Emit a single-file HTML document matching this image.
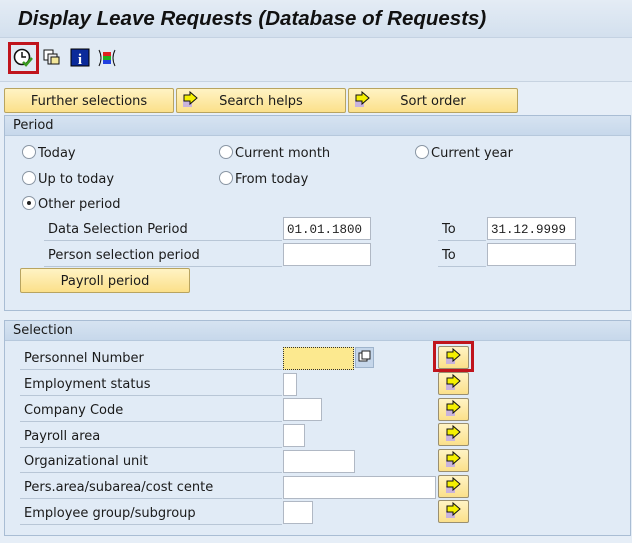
<!DOCTYPE html>
<html><head><meta charset="utf-8"><style>
*{box-sizing:border-box;margin:0;padding:0}
body{width:632px;height:543px;background:#e6eef7;font-family:"DejaVu Sans","Liberation Sans",sans-serif;font-size:13px;color:#1a1a1a;position:relative;overflow:hidden}
.a{position:absolute}
.title{left:0;top:0;width:632px;height:38px;background:linear-gradient(#e4ecf5,#d3e0ee);border-bottom:1px solid #c4d2e2}
.title span{position:absolute;left:18px;top:7px;font:italic bold 20.5px "Liberation Sans",sans-serif;color:#111}
.tb{left:0;top:38px;width:632px;height:44px;background:#e1eaf4;border-bottom:1px solid #c7d3e1}
.btn{background:linear-gradient(#fff3c4,#fbe08a);border:1px solid #b8a460;border-radius:2px;text-align:center;line-height:26px;height:25px}
.grp{border:1px solid #a9bdd4;background:#e1ebf6}
.gh{background:linear-gradient(#d6e3f1,#c7d8eb);height:20px;line-height:20px;padding-left:8px;border-bottom:1px solid #b6c8dc}
.inp{background:#fff;border:1px solid #b0b8c4;height:23px;font:12.5px "Liberation Mono",monospace;padding:5px 3px 0;color:#222}
.lbl{border-bottom:1px solid #b8c6d6;height:25px;line-height:28px}
.rad{width:14px;height:14px;border:1px solid #8a96a4;border-radius:50%;background:#fff;display:inline-block;vertical-align:-2px;margin-right:2px;position:relative}
.ab{width:31px;height:23px;background:linear-gradient(#fff3c4,#fbe08a);border:1px solid #9a8f70;border-radius:2px}
</style></head><body>
<div class="a title"><span>Display Leave Requests (Database of Requests)</span></div>
<div class="a tb"></div>
<div class="a" style="left:8px;top:42px;width:31px;height:32px;border:3px solid #c0141c"></div>
<svg class="a" style="left:12px;top:47px" width="22" height="22"><circle cx="10" cy="10" r="7.5" fill="#fff" stroke="#111" stroke-width="1.6"/><path d="M10 5v5h4" stroke="#111" stroke-width="1.5" fill="none"/><path d="M11 15l3 3 6-7" stroke="#3a9a20" stroke-width="2.5" fill="none"/></svg>
<svg class="a" style="left:42px;top:48px" width="20" height="20"><rect x="2" y="2" width="9" height="10" fill="#fff" stroke="#111"/><rect x="6" y="6" width="9" height="10" fill="#eee" stroke="#111"/><rect x="9" y="9" width="8" height="7" fill="#f3e79a" stroke="#111"/></svg>
<svg class="a" style="left:70px;top:48px" width="20" height="20"><rect x="1" y="1" width="18" height="17" fill="#0b2a9a" stroke="#000"/><text x="10" y="16" fill="#fff" font-family="Liberation Serif" font-weight="bold" font-size="15" text-anchor="middle">i</text></svg>
<svg class="a" style="left:97px;top:48px" width="20" height="20"><path d="M2 2q4 8 0 16M18 2q-4 8 0 16" stroke="#111" fill="none"/><rect x="6" y="4" width="8" height="4" fill="#e02020"/><rect x="6" y="8" width="8" height="4" fill="#20b020"/><rect x="6" y="12" width="8" height="4" fill="#2040e0"/></svg>
<div class="a btn" style="left:4px;top:88px;width:170px">Further selections</div>
<div class="a btn" style="left:176px;top:88px;width:170px">Search helps</div>
<div class="a btn" style="left:348px;top:88px;width:170px">Sort order</div>
<svg class="a" style="left:181px;top:91px" width="20" height="18"><rect x="2" y="9" width="9" height="7" fill="#c9b3dc"/><path d="M3 4h6v-3l7 6-7 6v-3h-6z" fill="#f5f000" stroke="#111"/></svg>
<svg class="a" style="left:353px;top:91px" width="20" height="18"><rect x="2" y="9" width="9" height="7" fill="#c9b3dc"/><path d="M3 4h6v-3l7 6-7 6v-3h-6z" fill="#f5f000" stroke="#111"/></svg>
<div class="a grp" style="left:4px;top:115px;width:627px;height:196px"><div class="gh">Period</div></div>
<div class="a" style="left:22px;top:145px"><span class="rad"></span>Today</div>
<div class="a" style="left:219px;top:145px"><span class="rad"></span>Current month</div>
<div class="a" style="left:415px;top:145px"><span class="rad"></span>Current year</div>
<div class="a" style="left:22px;top:171px"><span class="rad"></span>Up to today</div>
<div class="a" style="left:219px;top:171px"><span class="rad"></span>From today</div>
<div class="a" style="left:22px;top:196px"><span class="rad"><span style="position:absolute;left:4px;top:4px;width:4px;height:4px;background:#222;border-radius:50%"></span></span>Other period</div>
<div class="a lbl" style="left:44px;top:216px;width:238px;padding-left:4px">Data Selection Period</div>
<div class="a lbl" style="left:44px;top:242px;width:238px;padding-left:4px">Person selection period</div>
<div class="a inp" style="left:283px;top:217px;width:88px">01.01.1800</div>
<div class="a inp" style="left:283px;top:243px;width:88px"></div>
<div class="a lbl" style="left:438px;top:216px;width:48px;padding-left:4px">To</div>
<div class="a lbl" style="left:438px;top:242px;width:48px;padding-left:4px">To</div>
<div class="a inp" style="left:487px;top:217px;width:89px">31.12.9999</div>
<div class="a inp" style="left:487px;top:243px;width:89px"></div>
<div class="a btn" style="left:20px;top:268px;width:170px">Payroll period</div>
<div class="a grp" style="left:4px;top:320px;width:627px;height:216px"><div class="gh">Selection</div></div>
<div class="a lbl" style="left:20px;top:345px;width:262px;padding-left:4px">Personnel Number</div>
<div class="a lbl" style="left:20px;top:371px;width:262px;padding-left:4px">Employment status</div>
<div class="a lbl" style="left:20px;top:397px;width:262px;padding-left:4px">Company Code</div>
<div class="a lbl" style="left:20px;top:423px;width:262px;padding-left:4px">Payroll area</div>
<div class="a lbl" style="left:20px;top:448px;width:262px;padding-left:4px">Organizational unit</div>
<div class="a lbl" style="left:20px;top:474px;width:262px;padding-left:4px">Pers.area/subarea/cost cente</div>
<div class="a lbl" style="left:20px;top:500px;width:262px;padding-left:4px">Employee group/subgroup</div>
<div class="a inp" style="left:283px;top:347px;width:71px;background:#fce98f;border:1px dotted #333"></div>
<div class="a" style="left:355px;top:347px;width:19px;height:21px;background:#c5d6ea;border:1px solid #9fb4cc"><svg width="17" height="19"><rect x="3" y="5" width="8" height="8" fill="#fff" stroke="#222"/><rect x="6" y="3" width="8" height="8" fill="#fff" stroke="#222"/></svg></div>
<div class="a inp" style="left:283px;top:373px;width:14px"></div>
<div class="a inp" style="left:283px;top:398px;width:39px"></div>
<div class="a inp" style="left:283px;top:424px;width:22px"></div>
<div class="a inp" style="left:283px;top:450px;width:72px"></div>
<div class="a inp" style="left:283px;top:476px;width:153px"></div>
<div class="a inp" style="left:283px;top:501px;width:30px"></div>
<div class="a" style="left:433px;top:341px;width:41px;height:31px;border:3px solid #c0141c"></div>
<div class="a ab" style="left:438px;top:346px"></div><div class="a ab" style="left:438px;top:372px"></div><div class="a ab" style="left:438px;top:398px"></div><div class="a ab" style="left:438px;top:423px"></div><div class="a ab" style="left:438px;top:449px"></div><div class="a ab" style="left:438px;top:475px"></div><div class="a ab" style="left:438px;top:500px"></div>
<svg class="a" style="left:444px;top:348px" width="20" height="170"><defs><g id="ar"><rect x="2" y="9" width="9" height="7" fill="#c9b3dc"/><path d="M3 4h6v-3l7 6-7 6v-3h-6z" fill="#f5f000" stroke="#111"/></g></defs><use href="#ar"/><use href="#ar" y="26"/><use href="#ar" y="52"/><use href="#ar" y="77"/><use href="#ar" y="103"/><use href="#ar" y="129"/><use href="#ar" y="154"/></svg>
</body></html>
